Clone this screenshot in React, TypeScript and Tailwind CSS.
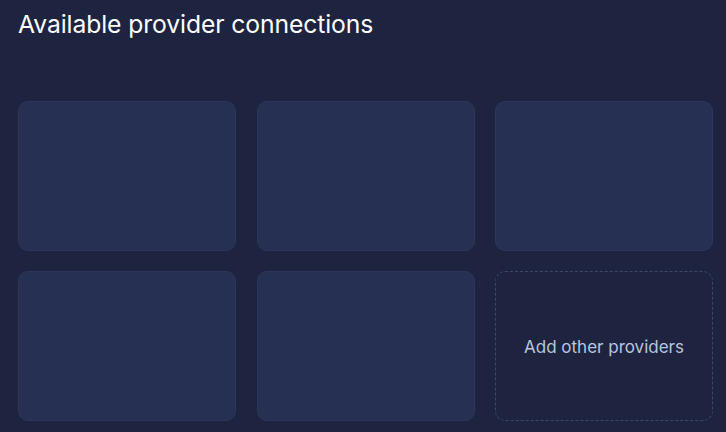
const providers = ['a', 'b', 'c', 'd', 'e']

export default function App() {
  return (
    <div className="min-h-screen w-[726px] h-[432px] overflow-hidden bg-[#1e2440] pl-[18px] pr-[13px] pt-[8px] font-['Inter','Noto_Sans',sans-serif]">
      <h1 className="text-[24.7px] leading-[32px] font-normal text-white tracking-[-0.1px]">
        Available provider connections
      </h1>

      <div className="mt-[61px] grid grid-cols-3 gap-x-[20.5px] gap-y-[20px]">
        {providers.map((p) => (
          <div
            key={p}
            className="h-[150px] rounded-[10px] border border-[#2b365a] bg-[#253052]"
          />
        ))}
        <div className="flex h-[150px] items-center justify-center rounded-[10px] border border-dashed border-[#3d4868] bg-[#1e2440] pt-[3px]">
          <span className="text-[17px] text-[#b9c5de]">Add other providers</span>
        </div>
      </div>
    </div>
  )
}
